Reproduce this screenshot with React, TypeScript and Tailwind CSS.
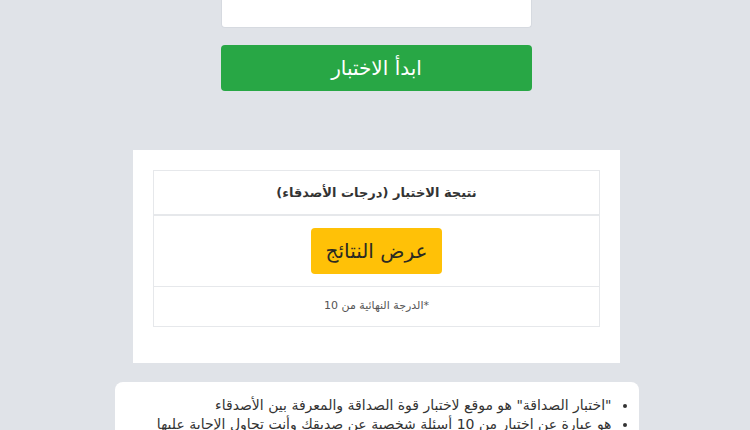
export default function App() {
  return (
    <div
      dir="rtl"
      className="h-[430px] w-[750px] overflow-hidden bg-[#e0e3e8] pl-[3px] text-[#212529]"
      style={{ fontFamily: '"DejaVu Sans", "Noto Sans", sans-serif' }}
    >
      {/* form top: input + start button */}
      <div className="mx-auto flex w-[311px] flex-col">
        <div className="h-[28px] rounded-b-[4px] border-x border-b border-[#d6dae0] bg-white" />
        <button className="mt-[17px] h-[46px] w-full rounded-[4px] bg-[#28a745] text-[20px] text-white">
          ابدأ الاختبار
        </button>
      </div>

      {/* result panel */}
      <div className="mx-auto mt-[59px] w-[487px] bg-white p-[20px] pb-[36px]">
        <div className="border border-[#e6e8eb]">
          <div className="flex h-[45px] items-center justify-center border-b-2 border-[#e6e8eb] text-[13px] font-bold text-[#333]">
            نتيجة الاختبار (درجات الأصدقاء)
          </div>
          <div className="flex h-[71px] items-center justify-center border-b border-[#e6e8eb]">
            <button className="h-[46px] w-[131px] rounded-[4px] bg-[#ffc107] text-[20px] text-[#2b2a22]">
              عرض النتائج
            </button>
          </div>
          <div className="flex h-[39px] items-center justify-center text-[11px] text-[#555]">
            *الدرجة النهائية من 10
          </div>
        </div>
      </div>

      {/* about card */}
      <div className="mx-auto mt-[19px] w-[524px] rounded-[8px] bg-white pt-[14px] pb-4">
        <ul className="list-disc pr-[27px] text-[14px] leading-[19px] text-[#333]">
          <li>"اختبار الصداقة" هو موقع لاختبار قوة الصداقة والمعرفة بين الأصدقاء</li>
          <li>هو عبارة عن اختبار من 10 أسئلة شخصية عن صديقك وأنت تحاول الإجابة عليها</li>
        </ul>
      </div>
    </div>
  );
}
